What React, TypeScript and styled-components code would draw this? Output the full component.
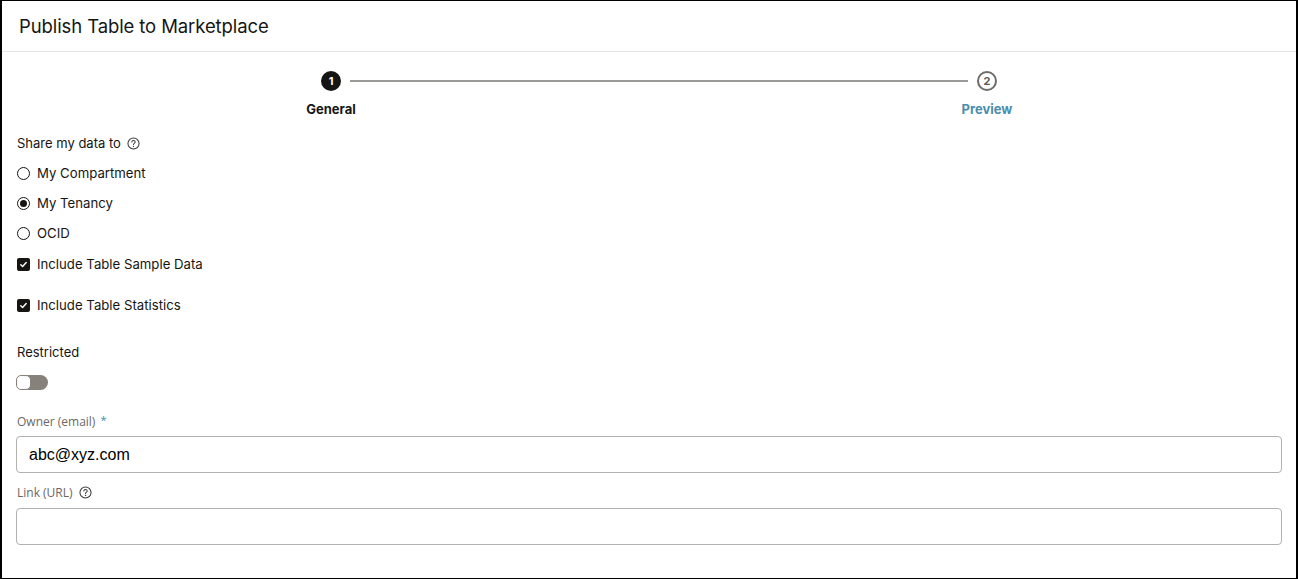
import * as React from "react";
import styled, { createGlobalStyle } from "styled-components";

const GlobalStyle = createGlobalStyle`
  html, body {
    margin: 0;
    padding: 0;
    background: #ffffff;
  }
  * {
    box-sizing: border-box;
  }
`;

const Frame = styled.div`
  width: 1298px;
  height: 579px;
  border: 1px solid #000;
  border-left-width: 2px;
  border-right-width: 2px;
  background: #fff;
  font-family: Inter, "Liberation Sans", sans-serif;
  color: #161513;
  display: flex;
  flex-direction: column;
  overflow: hidden;
`;

const Header = styled.div`
  height: 51px;
  border-bottom: 1px solid #e4e4e4;
  display: flex;
  align-items: center;
  padding-left: 17px;
`;

const Title = styled.h1`
  margin: 0;
  font-size: 18.5px;
  font-weight: 400;
  letter-spacing: -0.1px;
  color: #161513;
`;

const Body = styled.div`
  padding: 0 14px;
  display: flex;
  flex-direction: column;
`;

/* stepper */
const Stepper = styled.div`
  margin: 19px 0 0 305px;
  width: 676px;
  display: grid;
  grid-template-columns: 20px 1fr 20px;
  grid-template-rows: 20px 16px;
  row-gap: 10px;
  align-items: center;
`;

const StepCircle = styled.div<{ $active?: boolean }>`
  width: 20px;
  height: 20px;
  border-radius: 50%;
  display: flex;
  align-items: center;
  justify-content: center;
  font-size: 11px;
  font-weight: 700;
  background: ${(p) => (p.$active ? "#161513" : "#fff")};
  color: ${(p) => (p.$active ? "#fff" : "#5a5753")};
  border: ${(p) => (p.$active ? "none" : "2px solid #6f6c69")};
`;

const StepLine = styled.div`
  height: 2px;
  margin: 0 9px;
  background: #9c9a97;
`;

const StepLabel = styled.div<{ $col: number; $link?: boolean }>`
  grid-column: ${(p) => p.$col};
  grid-row: 2;
  display: flex;
  justify-content: center;
  white-space: nowrap;
  font-size: 13px;
  font-weight: 700;
  color: ${(p) => (p.$link ? "#4a8eab" : "#161513")};
`;

/* form bits */
const FieldLabel = styled.div<{ $top: number; $muted?: boolean }>`
  margin-top: ${(p) => p.$top}px;
  height: 20px;
  display: flex;
  align-items: center;
  gap: 6px;
  font-size: ${(p) => (p.$muted ? "12px" : "13px")};
  font-family: ${(p) =>
    p.$muted ? `"Open Sans", "Noto Sans", sans-serif` : `Inter, "Liberation Sans", sans-serif`};
  color: ${(p) => (p.$muted ? "#6b6864" : "#161513")};
  padding-left: 1px;
`;

const Asterisk = styled.span`
  color: #3d8bab;
  font-size: 11px;
  margin-left: -1px;
  align-self: flex-start;
  margin-top: 1px;
`;

const OptionRow = styled.label<{ $top?: number }>`
  margin-top: ${(p) => p.$top ?? 0}px;
  height: 30px;
  display: flex;
  align-items: center;
  gap: 7px;
  padding-left: 1px;
  font-size: 13.2px;
  color: #161513;
`;

const Radio = styled.span<{ $checked?: boolean }>`
  width: 13px;
  height: 13px;
  border-radius: 50%;
  border: 1.3px solid #161513;
  display: flex;
  align-items: center;
  justify-content: center;
  &::after {
    content: "";
    display: ${(p) => (p.$checked ? "block" : "none")};
    width: 7px;
    height: 7px;
    border-radius: 50%;
    background: #161513;
  }
`;

const Check = styled.span`
  width: 13px;
  height: 13px;
  border-radius: 2px;
  background: #161513;
  display: flex;
  align-items: center;
  justify-content: center;
`;

const Toggle = styled.div`
  margin-top: 13px;
  width: 32px;
  height: 15px;
  border-radius: 8px;
  background: #87817b;
  position: relative;
`;

const Knob = styled.span`
  position: absolute;
  left: 0;
  top: 0;
  width: 15px;
  height: 15px;
  border-radius: 5px;
  background: #fff;
  border: 1.5px solid #87817b;
`;

const Input = styled.div<{ $top: number }>`
  margin-top: ${(p) => p.$top}px;
  height: 37px;
  width: 1266px;
  border: 1px solid #b3b0ad;
  border-radius: 4px;
  display: flex;
  align-items: center;
  padding-left: 12px;
  font-family: "Liberation Sans", Arial, sans-serif;
  font-size: 16px;
  color: #000;
`;

const HelpIcon: React.FC = () => (
  <svg width="13" height="13" viewBox="0 0 14 14" fill="none">
    <circle cx="7" cy="7" r="6" stroke="#3a3836" strokeWidth="1.1" />
    <path
      d="M5.2 5.5c0-1 .8-1.7 1.8-1.7s1.8.7 1.8 1.6c0 .8-.5 1.1-1.1 1.5-.5.3-.7.6-.7 1.2"
      stroke="#3a3836"
      strokeWidth="1.1"
      strokeLinecap="round"
    />
    <circle cx="7" cy="10.1" r="0.7" fill="#3a3836" />
  </svg>
);

const CheckMark: React.FC = () => (
  <svg width="9" height="9" viewBox="0 0 10 10" fill="none">
    <path d="M2 5.2l2 2 4-4.4" stroke="#fff" strokeWidth="1.6" strokeLinecap="round" strokeLinejoin="round" />
  </svg>
);

export default function App() {
  return (
    <>
      <GlobalStyle />
      <Frame>
        <Header>
          <Title>Publish Table to Marketplace</Title>
        </Header>
        <Body>
          <Stepper>
            <StepCircle $active>1</StepCircle>
            <StepLine />
            <StepCircle>2</StepCircle>
            <StepLabel $col={1}>General</StepLabel>
            <StepLabel $col={3} $link>
              Preview
            </StepLabel>
          </Stepper>

          <FieldLabel $top={16}>
            Share my data to <HelpIcon />
          </FieldLabel>
          <OptionRow $top={5}>
            <Radio />
            My Compartment
          </OptionRow>
          <OptionRow>
            <Radio $checked />
            My Tenancy
          </OptionRow>
          <OptionRow>
            <Radio />
            OCID
          </OptionRow>
          <OptionRow $top={1}>
            <Check>
              <CheckMark />
            </Check>
            Include Table Sample Data
          </OptionRow>
          <OptionRow $top={11}>
            <Check>
              <CheckMark />
            </Check>
            Include Table Statistics
          </OptionRow>

          <FieldLabel $top={22}>Restricted</FieldLabel>
          <Toggle>
            <Knob />
          </Toggle>

          <FieldLabel $top={21} $muted>
            Owner (email) <Asterisk>*</Asterisk>
          </FieldLabel>
          <Input $top={5}>abc@xyz.com</Input>

          <FieldLabel $top={9} $muted>
            Link (URL) <HelpIcon />
          </FieldLabel>
          <Input $top={6} />
        </Body>
      </Frame>
    </>
  );
}
